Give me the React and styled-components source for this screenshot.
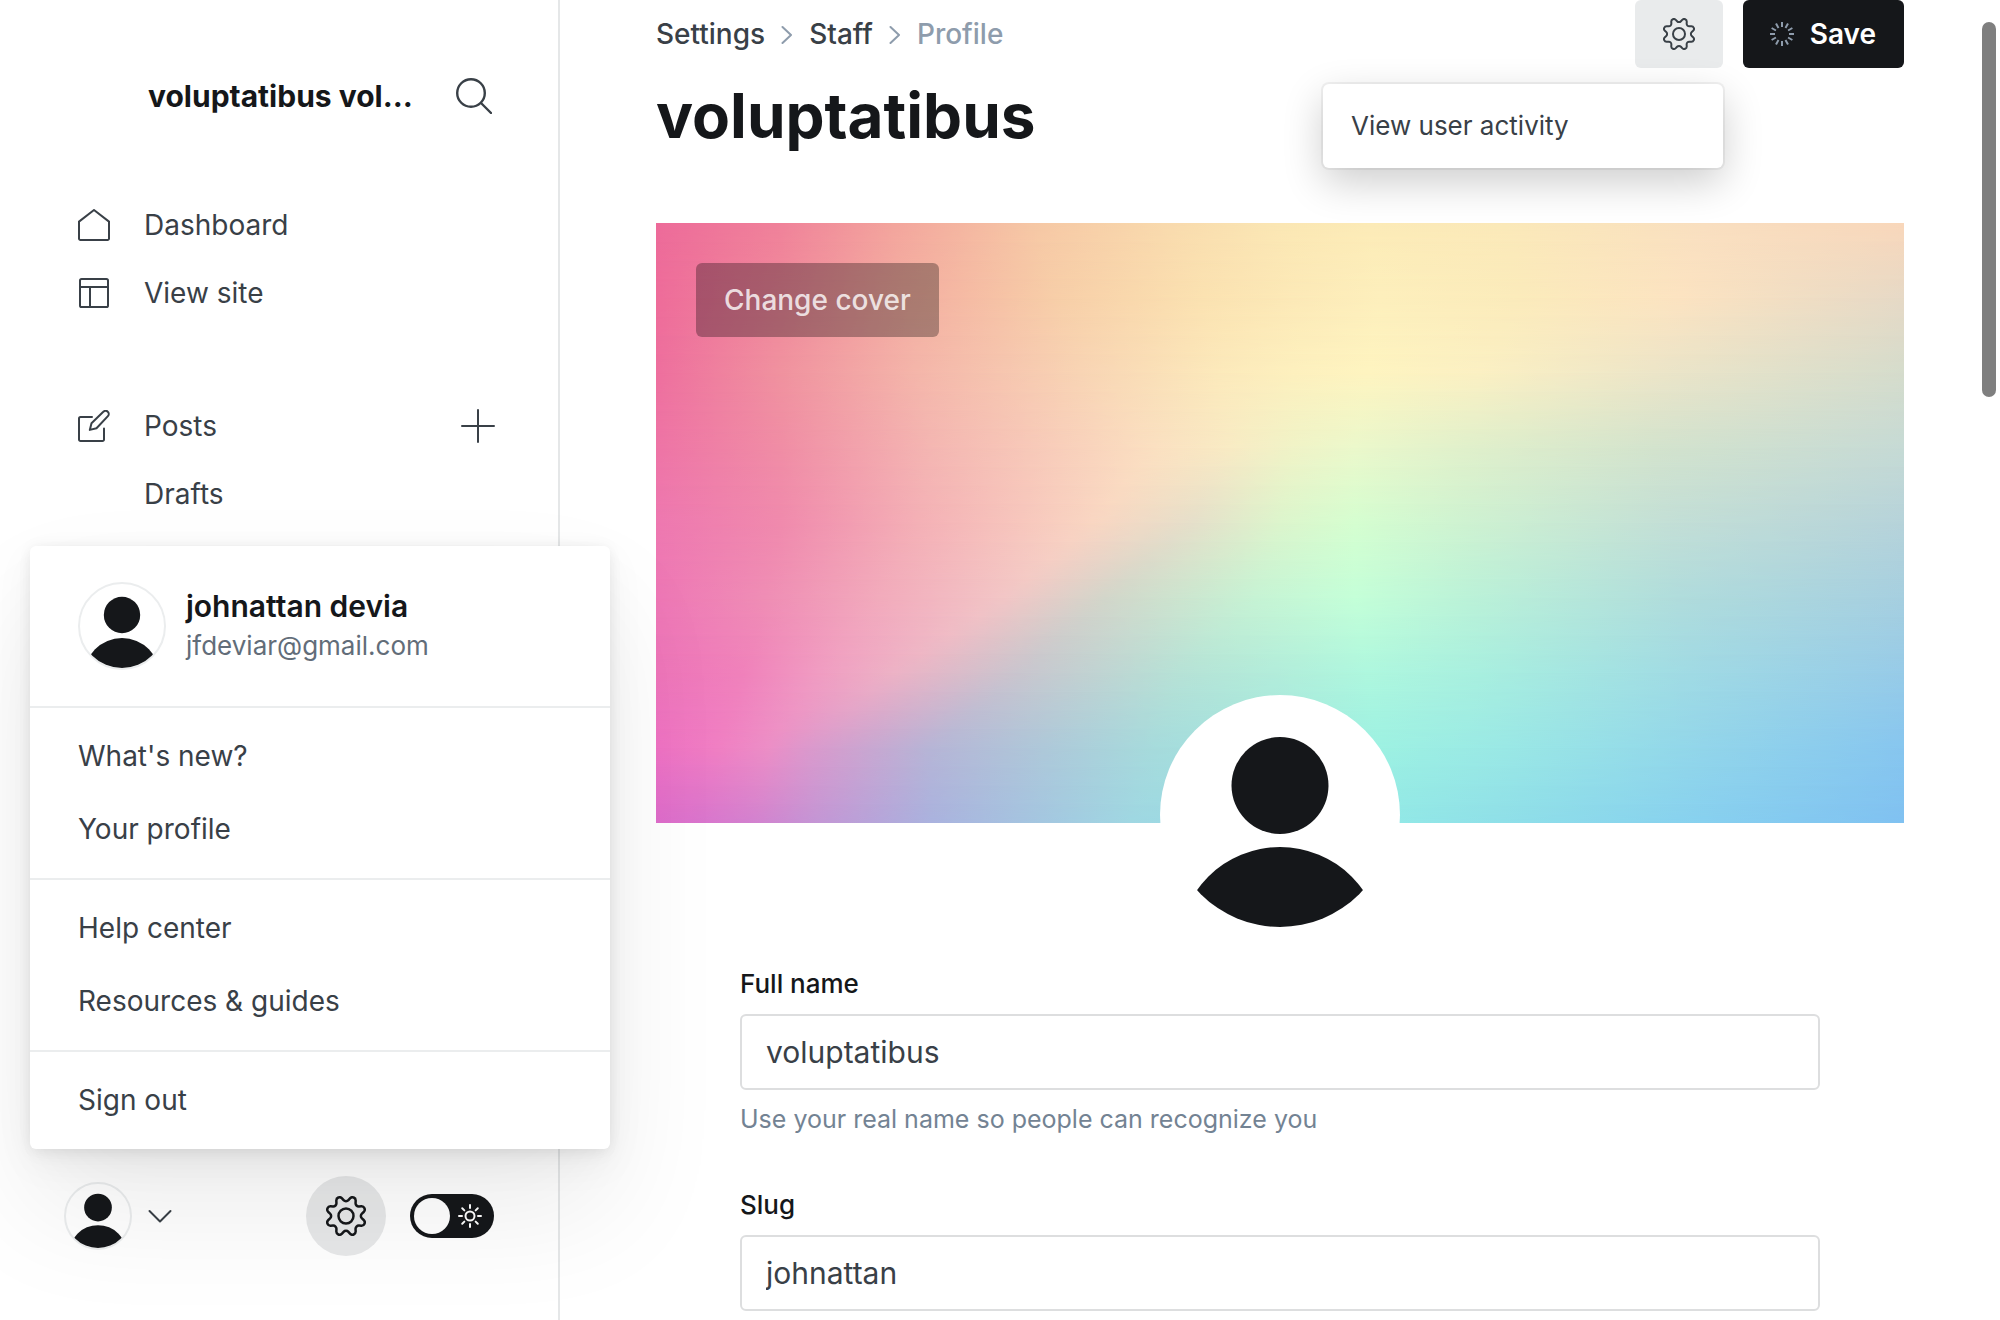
import React from "react";
import styled, { createGlobalStyle } from "styled-components";

const color = {
  ink: "#15171a",
  text: "#394047",
  muted: "#738393",
  faint: "#8e9cac",
  line: "#ebedee",
  field: "#dddedf",
};

const GlobalStyle = createGlobalStyle`
  *, *::before, *::after { box-sizing: border-box; }
  body {
    margin: 0;
    background: #fff;
    color: ${color.text};
    font-family: Inter, "Liberation Sans", sans-serif;
    font-size: 28px;
    line-height: 36px;
    -webkit-font-smoothing: antialiased;
  }
  a { color: inherit; text-decoration: none; }
  button, input { font: inherit; color: inherit; }
  button { border: 0; padding: 0; background: none; cursor: pointer; }
  svg { display: block; flex: none; }
`;

const Shell = styled.div`
  display: flex;
  min-height: 100vh;
`;

/* Sidebar */

const Sidebar = styled.aside`
  position: sticky;
  top: 0;
  z-index: 2;
  display: flex;
  flex-direction: column;
  flex: none;
  width: 560px;
  height: 100vh;
  border-right: 2px solid #e5e7e8;
`;

const SiteHeader = styled.header`
  display: flex;
  align-items: center;
  justify-content: space-between;
  padding: 78px 66px 77px 148px;
`;

const SiteName = styled.strong`
  color: ${color.ink};
  font-size: 30px;
  font-weight: 700;
  white-space: nowrap;
`;

const NavGroup = styled.ul`
  list-style: none;
  margin: 0 0 65px;
  padding: 0 63px 0 78px;
`;

const NavRow = styled.li`
  display: flex;
  align-items: center;
  justify-content: space-between;
  height: 68px;
`;

const NavLink = styled.a`
  display: grid;
  grid-template-columns: 32px auto;
  align-items: center;
  column-gap: 34px;
`;

const NavLabel = styled.span`
  grid-column: 2;
`;

const SidebarFooter = styled.footer`
  position: relative;
  display: flex;
  align-items: center;
  justify-content: space-between;
  margin-top: auto;
  padding: 0 64px;
  margin-bottom: 64px;
`;

const AccountButton = styled.button`
  display: flex;
  align-items: center;
  gap: 16px;
`;

const FooterTools = styled.div`
  display: flex;
  align-items: center;
  gap: 24px;
`;

const RoundButton = styled.button`
  display: grid;
  place-items: center;
  width: 80px;
  height: 80px;
  border-radius: 50%;
  background: rgba(57, 64, 71, 0.12);
  color: ${color.ink};
`;

const ThemeToggle = styled.label`
  display: grid;
  align-items: center;
  > * { grid-area: 1 / 1; }
  > svg { justify-self: end; margin-right: 12px; color: #fff; pointer-events: none; }
`;

const ToggleInput = styled.input`
  appearance: none;
  display: flex;
  align-items: center;
  width: 84px;
  height: 44px;
  margin: 0;
  padding: 4px;
  border-radius: 22px;
  background: ${color.ink};
  cursor: pointer;
  &::before {
    content: "";
    width: 36px;
    height: 36px;
    border-radius: 50%;
    background: #fff;
  }
  &:checked::before { margin-left: auto; }
`;

const AvatarRing = styled.span`
  display: block;
  flex: none;
  border: 2px solid ${color.line};
  border-radius: 50%;
`;

/* Account menu */

const AccountMenu = styled.div`
  position: absolute;
  left: 30px;
  bottom: calc(100% + 27px);
  width: 580px;
  border-radius: 6px;
  background: #fff;
  box-shadow:
    0 0 14px rgba(0, 0, 0, 0.05),
    0 6px 16px rgba(0, 0, 0, 0.04),
    0 14px 40px rgba(0, 0, 0, 0.05),
    0 60px 120px rgba(0, 0, 0, 0.08);
`;

const AccountCard = styled.div`
  display: flex;
  align-items: center;
  gap: 20px;
  padding: 36px 48px;
`;

const AccountText = styled.div`
  display: flex;
  flex-direction: column;
  line-height: 40px;
`;

const AccountName = styled.strong`
  color: ${color.ink};
  font-size: 30px;
  font-weight: 600;
`;

const AccountEmail = styled.span`
  color: #626d79;
  font-size: 26px;
`;

const MenuSection = styled.ul`
  list-style: none;
  margin: 0;
  padding: 12px 48px;
  border-top: 2px solid ${color.line};
`;

const MenuLink = styled.a`
  display: block;
  line-height: 73px;
`;

/* Main column */

const Main = styled.main`
  flex: 1;
  min-width: 0;
  padding: 0 96px;
`;

const PageHeader = styled.header`
  display: flex;
  justify-content: space-between;
  align-items: flex-start;
  height: 223px;
`;

const Breadcrumbs = styled.nav`
  display: flex;
  align-items: center;
  gap: 16px;
  height: 68px;
  font-weight: 500;
  > svg { color: ${color.faint}; }
`;

const CurrentCrumb = styled.span`
  color: ${color.faint};
`;

const PageTitle = styled.h1`
  margin: 12px 0 0;
  color: ${color.ink};
  font-size: 62px;
  line-height: 72px;
  font-weight: 700;
`;

const HeaderActions = styled.div`
  position: relative;
  display: flex;
  gap: 20px;
`;

const GearButton = styled.button`
  display: grid;
  place-items: center;
  width: 88px;
  height: 68px;
  border-radius: 6px;
  background: #e9ebec;
`;

const SaveButton = styled.button`
  display: flex;
  align-items: center;
  gap: 16px;
  height: 68px;
  padding: 0 28px 0 27px;
  border-radius: 6px;
  background: ${color.ink};
  color: #fff;
  font-weight: 600;
  > svg { color: #8e9cac; }
`;

const ActionsMenu = styled.div`
  position: absolute;
  top: 84px;
  right: 181px;
  width: 400px;
  padding: 12px 28px;
  border-radius: 6px;
  background: #fff;
  font-size: 26px;
  line-height: 60px;
  box-shadow:
    0 0 0 2px rgba(0, 0, 0, 0.05),
    0 14px 40px rgba(0, 0, 0, 0.2);
`;

const Cover = styled.section`
  display: grid;
  height: 600px;
  > * { grid-area: 1 / 1; }
`;

const CoverBand = styled.div`
  background: linear-gradient(to right, ${(p) => p.$stops});
  mask-image: ${(p) =>
    p.$from < 0
      ? "none"
      : `linear-gradient(to bottom, transparent ${p.$from}%, #000 ${p.$to}%)`};
`;

const ChangeCover = styled.button`
  z-index: 1;
  justify-self: start;
  align-self: start;
  margin: 40px;
  height: 74px;
  padding: 0 28px;
  border-radius: 6px;
  background: rgba(0, 0, 0, 0.3);
  color: rgba(255, 255, 255, 0.8);
  font-weight: 500;
`;

const ProfilePicture = styled.div`
  position: relative;
  width: 240px;
  margin: -128px auto 0;
  padding: 8px;
  border-radius: 50%;
  background: #fff;
`;

const ProfileForm = styled.form`
  display: flex;
  flex-direction: column;
  gap: 50px;
  padding: 31px 84px 0;
`;

const Field = styled.div`
  display: flex;
  flex-direction: column;
`;

const FieldLabel = styled.label`
  margin-bottom: 12px;
  color: ${color.ink};
  font-size: 26px;
  font-weight: 500;
`;

const TextInput = styled.input`
  width: 100%;
  height: 76px;
  padding: 0 24px;
  border: 2px solid ${color.field};
  border-radius: 6px;
  background: #fff;
  color: ${color.text};
  font-size: 30px;
  outline: 0;
`;

const FieldHint = styled.p`
  margin: 11px 0 0;
  color: ${color.muted};
  font-size: 25px;
`;

const ScrollThumb = styled.div`
  position: fixed;
  top: 22px;
  right: 4px;
  width: 14px;
  height: 375px;
  border-radius: 7px;
  background: #7f7f7f;
`;

/* Icons */

function Icon({ size, box = size, stroke = 2, children }) {
  return (
    <svg width={size} height={size} viewBox={`0 0 ${box} ${box}`} fill="none"
      stroke="currentColor" strokeWidth={stroke} strokeLinecap="round"
      strokeLinejoin="round" aria-hidden="true">
      {children}
    </svg>
  );
}

const SearchIcon = () => (
  <Icon size={36} stroke={2.4}>
    <circle cx="15" cy="15" r="13.8" />
    <path d="M25 25l10 10" />
  </Icon>
);

const HomeIcon = () => (
  <Icon size={32}>
    <path d="M1 12.600v16.900A1.500 1.500 0 0 0 2.500 31h27a1.500 1.500 0 0 0 1.500-1.500V12.600L16 1z" />
  </Icon>
);

const LayoutIcon = () => (
  <Icon size={32}>
    <rect x="2" y="2" width="28" height="28" rx="1.6" />
    <path d="M2 10h28M12 10v20" />
  </Icon>
);

const ComposeIcon = () => (
  <Icon size={32}>
    <path d="M14 7H2.500A1.500 1.500 0 0 0 1 8.500v21A1.500 1.500 0 0 0 2.500 31h22a1.500 1.500 0 0 0 1.500-1.500V18.500" />
    <path d="M18.500 18.200l-6.700 1.700 1.700-6.700L25.300 1.800a2.900 2.900 0 0 1 4.600 4.300z" />
  </Icon>
);

const PlusIcon = () => (
  <Icon size={34}>
    <path d="M17 1v32M1 17h32" />
  </Icon>
);

const ChevronDownIcon = () => (
  <Icon size={24}>
    <path d="M1.500 7L12 17.500 22.500 7" />
  </Icon>
);

const CrumbIcon = () => (
  <svg width="12" height="20" viewBox="0 0 12 20" fill="none" stroke="currentColor"
    strokeWidth="2" strokeLinecap="round" strokeLinejoin="round" aria-hidden="true">
    <path d="M1.500 3L10 11l-8.500 8" />
  </svg>
);

const GearIcon = ({ size }) => (
  <Icon size={size} box={24} stroke={1.5}>
    <path d="M10.546 2.438a1.957 1.957 0 0 0 2.908 0L14.4 1.400a1.959 1.959 0 0 1 3.410 1.413l-.071 1.400A1.958 1.958 0 0 0 19.790 6.270l1.400-.071A1.959 1.959 0 0 1 22.600 9.600l-1.040.944a1.959 1.959 0 0 0 0 2.909l1.040.944a1.959 1.959 0 0 1-1.413 3.410l-1.400-.071a1.958 1.958 0 0 0-2.056 2.056l.071 1.400A1.959 1.959 0 0 1 14.400 22.600l-.941-1.041a1.959 1.959 0 0 0-2.908 0L9.600 22.600a1.959 1.959 0 0 1-3.400-1.408l.072-1.400a1.958 1.958 0 0 0-2.056-2.056l-1.400.071A1.958 1.958 0 0 1 1.400 14.400l1.041-.944a1.959 1.959 0 0 0 0-2.909L1.400 9.600A1.958 1.958 0 0 1 2.813 6.200l1.400.071A1.958 1.958 0 0 0 6.264 4.210l-.072-1.400A1.959 1.959 0 0 1 9.600 1.400z" />
    <circle cx="12" cy="12" r="4.500" />
  </Icon>
);

const rays = (count) => Array.from({ length: count }, (_, i) => (360 / count) * i);

const SunIcon = () => (
  <Icon size={24}>
    <circle cx="12" cy="12" r="4.500" />
    {rays(8).map((a) => (
      <path key={a} d="M12 1v3" transform={`rotate(${a} 12 12)`} />
    ))}
  </Icon>
);

const SpinnerIcon = () => (
  <svg width="24" height="24" viewBox="0 0 24 24" stroke="currentColor" strokeWidth="2" aria-hidden="true">
    {rays(12).map((a) => (
      <path key={a} d="M12 0v5" transform={`rotate(${a} 12 12)`} />
    ))}
  </svg>
);

function PersonIcon({ size }) {
  const id = React.useId();
  return (
    <svg width={size} height={size} viewBox="0 0 224 224" fill={color.ink} aria-hidden="true">
      <clipPath id={id}>
        <circle cx="112" cy="112" r="112" />
      </clipPath>
      <g clipPath={`url(#${id})`}>
        <circle cx="112" cy="82.500" r="48.500" />
        <circle cx="112" cy="245.500" r="101.500" />
      </g>
    </svg>
  );
}

/* Cover artwork: rows of a colour mesh, each stop being [x in %, colour]. */
const coverMesh = [
  "0 ed6b9a, 10 f0829a, 19 f3a59d, 30 f6c7a5, 42 f9dcae, 50 fbe7b4, 57 fcebb7, 68 fbe9b9, 84 f9dfc0, 100 f9d7bb",
  "0 ee6c9a, 10 f0899b, 20 f4aea1, 32 f7cea8, 44 fbe2b1, 51 fce9b7, 58 fdefbc, 69 fbebbb, 82 fce3c1, 100 e6d9c6",
  "0 ee6f9e, 10 f0929f, 21 f4b6aa, 34 f8d4b4, 45 fce9bb, 51 fdf0be, 57 fef4c0, 66 fbf0c3, 80 ece5c8, 100 d5dccc",
  "0 ee74a6, 10 f08da5, 22 f4b6b2, 40 fbe0c1, 46 f8ebc4, 51 f0f3c7, 56 ebf8cb, 65 e0f0cb, 80 d3e3cd, 100 c6dad5",
  "0 ee78b0, 10 f08aad, 21 f4b0b6, 35 f9d6c2, 43 e5dfca, 50 dcf5cc, 56 d5fed0, 65 cef2d1, 81 c3dfd6, 100 b6d3da",
  "0 ee77b6, 9 ef8eb5, 18 f2abbc, 28 f2c6c6, 36 d2d6ca, 48 c6f3d4, 56 c4ffd8, 65 bbf2d8, 82 b0dcdc, 100 a6cfe0",
  "0 ee75ba, 7 f081bb, 13 f09cc2, 19 edb2c5, 29 c9c5ce, 42 b6e2d6, 57 aef7de, 66 a8efdf, 83 a0dae4, 100 97cbe8",
  "0 ef72c4, 5 f07fc3, 9 ec8ec6, 12 dc98cc, 22 b6b5d6, 40 a6dbdc, 58 9df1e2, 68 9ae8e5, 84 92d5ea, 100 87c6ef",
  "0 de6ccb, 4 d876cd, 8 d282cf, 13 c396d5, 22 aab2de, 38 9fd7e2, 58 92e9e6, 68 8fdfe8, 84 87d0ef, 100 80c1f1",
].map((row) =>
  row.split(", ").map((stop) => {
    const [x, hex] = stop.split(" ");
    return [Number(x), ...[0, 2, 4].map((i) => parseInt(hex.slice(i, i + 2), 16))];
  })
);

const subdivisions = 4;
const bandCount = (coverMesh.length - 1) * subdivisions;
const bandStep = 100 / bandCount;

const coverBands = Array.from({ length: bandCount + 1 }, (_, i) => {
  const row = Math.min(Math.floor(i / subdivisions), coverMesh.length - 2);
  const t = i / subdivisions - row;
  return coverMesh[row]
    .map((stop, s) => stop.map((v, k) => v + (coverMesh[row + 1][s][k] - v) * t))
    .map(([x, r, g, b]) => `rgb(${r} ${g} ${b}) ${x}%`)
    .join(", ");
});

const menuSections = [
  ["What's new?", "Your profile"],
  ["Help center", "Resources & guides"],
  ["Sign out"],
];

export default function App() {
  return (
    <>
      <GlobalStyle />
      <Shell>
        <Sidebar>
          <SiteHeader>
            <SiteName>voluptatibus vol…</SiteName>
            <button type="button" aria-label="Search"><SearchIcon /></button>
          </SiteHeader>
          <nav aria-label="Main">
            <NavGroup>
              <NavRow>
                <NavLink href="#dashboard"><HomeIcon /><NavLabel>Dashboard</NavLabel></NavLink>
              </NavRow>
              <NavRow>
                <NavLink href="#site"><LayoutIcon /><NavLabel>View site</NavLabel></NavLink>
              </NavRow>
            </NavGroup>
            <NavGroup>
              <NavRow>
                <NavLink href="#posts"><ComposeIcon /><NavLabel>Posts</NavLabel></NavLink>
                <button type="button" aria-label="New post"><PlusIcon /></button>
              </NavRow>
              <NavRow>
                <NavLink href="#drafts"><NavLabel>Drafts</NavLabel></NavLink>
              </NavRow>
            </NavGroup>
          </nav>
          <SidebarFooter>
            <AccountButton type="button" aria-label="Account">
              <AvatarRing><PersonIcon size={64} /></AvatarRing>
              <ChevronDownIcon />
            </AccountButton>
            <FooterTools>
              <RoundButton type="button" aria-label="Settings"><GearIcon size={40} /></RoundButton>
              <ThemeToggle>
                <ToggleInput type="checkbox" role="switch" aria-label="Night mode" />
                <SunIcon />
              </ThemeToggle>
            </FooterTools>
            <AccountMenu>
              <AccountCard>
                <AvatarRing><PersonIcon size={84} /></AvatarRing>
                <AccountText>
                  <AccountName>johnattan devia</AccountName>
                  <AccountEmail>jfdeviar@gmail.com</AccountEmail>
                </AccountText>
              </AccountCard>
              {menuSections.map((items) => (
                <MenuSection key={items[0]}>
                  {items.map((item) => (
                    <li key={item}><MenuLink href="#menu">{item}</MenuLink></li>
                  ))}
                </MenuSection>
              ))}
            </AccountMenu>
          </SidebarFooter>
        </Sidebar>

        <Main>
          <PageHeader>
            <div>
              <Breadcrumbs aria-label="Breadcrumb">
                <a href="#settings">Settings</a>
                <CrumbIcon />
                <a href="#staff">Staff</a>
                <CrumbIcon />
                <CurrentCrumb>Profile</CurrentCrumb>
              </Breadcrumbs>
              <PageTitle>voluptatibus</PageTitle>
            </div>
            <HeaderActions>
              <GearButton type="button" aria-label="User actions"><GearIcon size={32} /></GearButton>
              <SaveButton type="submit" form="profile"><SpinnerIcon />Save</SaveButton>
              <ActionsMenu>
                <a href="#activity">View user activity</a>
              </ActionsMenu>
            </HeaderActions>
          </PageHeader>

          <Cover>
            {coverBands.map((stops, i) => (
              <CoverBand key={i} $stops={stops} $from={(i - 1) * bandStep} $to={i * bandStep} />
            ))}
            <ChangeCover type="button">Change cover</ChangeCover>
          </Cover>
          <ProfilePicture><PersonIcon size={224} /></ProfilePicture>

          <ProfileForm id="profile">
            <Field>
              <FieldLabel htmlFor="full-name">Full name</FieldLabel>
              <TextInput id="full-name" type="text" defaultValue="voluptatibus" />
              <FieldHint>Use your real name so people can recognize you</FieldHint>
            </Field>
            <Field>
              <FieldLabel htmlFor="slug">Slug</FieldLabel>
              <TextInput id="slug" type="text" defaultValue="johnattan" />
            </Field>
          </ProfileForm>
        </Main>
      </Shell>
      <ScrollThumb aria-hidden="true" />
    </>
  );
}
